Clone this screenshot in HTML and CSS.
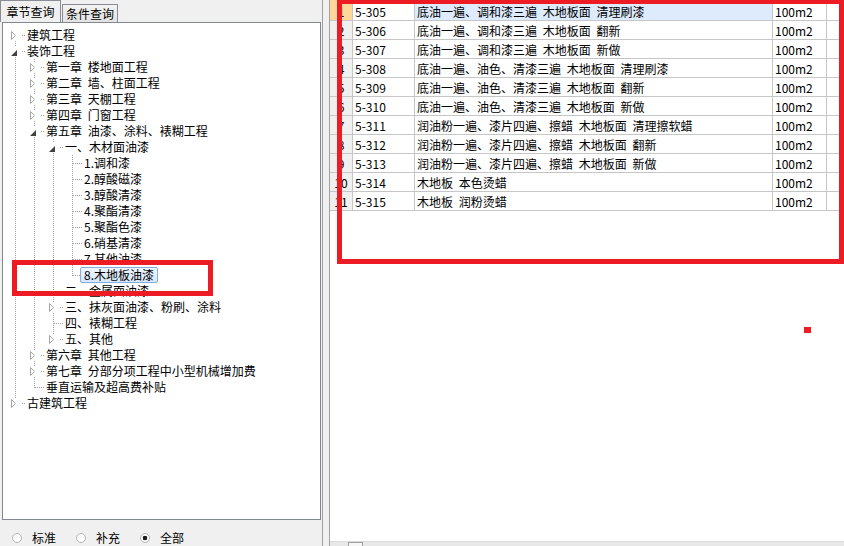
FILE: index.html
```html
<!DOCTYPE html>
<html lang="zh-CN">
<head>
  <meta charset="UTF-8">
  <title>定额查询</title>
  <link rel="stylesheet" href="styles.css">
</head>
<body>
  <svg class="sprite" xmlns="http://www.w3.org/2000/svg">
    <symbol id="closed" viewBox="0 0 11 11"><path d="M1.5 1.5 L5.5 5.5 L1.5 9.5 Z" fill="#fff" stroke="#a6a6a6"/></symbol>
    <symbol id="open" viewBox="0 0 11 11"><path d="M7 4 L7 10 L1 10 Z" fill="#404040"/></symbol>
  </svg>

  <div class="app">
    <!-- 左侧：章节树 -->
    <div class="left">
      <div class="tabs">
        <div class="tab active">章节查询</div>
        <div class="tab">条件查询</div>
      </div>

      <div class="tree">
        <div class="row"><i class="c first"><svg class="btn"><use href="#closed"/></svg></i><span class="label">建筑工程</span></div>
        <div class="row"><i class="c"><svg class="btn"><use href="#open"/></svg></i><span class="label">装饰工程</span></div>
        <div class="row"><i class="g v"></i><i class="c"><svg class="btn"><use href="#closed"/></svg></i><span class="label">第一章 楼地面工程</span></div>
        <div class="row"><i class="g v"></i><i class="c"><svg class="btn"><use href="#closed"/></svg></i><span class="label">第二章 墙、柱面工程</span></div>
        <div class="row"><i class="g v"></i><i class="c"><svg class="btn"><use href="#closed"/></svg></i><span class="label">第三章 天棚工程</span></div>
        <div class="row"><i class="g v"></i><i class="c"><svg class="btn"><use href="#closed"/></svg></i><span class="label">第四章 门窗工程</span></div>
        <div class="row"><i class="g v"></i><i class="c"><svg class="btn"><use href="#open"/></svg></i><span class="label">第五章 油漆、涂料、裱糊工程</span></div>
        <div class="row"><i class="g v"></i><i class="g v"></i><i class="c"><svg class="btn"><use href="#open"/></svg></i><span class="label">一、木材面油漆</span></div>
        <div class="row"><i class="g v"></i><i class="g v"></i><i class="g v"></i><i class="c"></i><span class="label">1.调和漆</span></div>
        <div class="row"><i class="g v"></i><i class="g v"></i><i class="g v"></i><i class="c"></i><span class="label">2.醇酸磁漆</span></div>
        <div class="row"><i class="g v"></i><i class="g v"></i><i class="g v"></i><i class="c"></i><span class="label">3.醇酸清漆</span></div>
        <div class="row"><i class="g v"></i><i class="g v"></i><i class="g v"></i><i class="c"></i><span class="label">4.聚酯清漆</span></div>
        <div class="row"><i class="g v"></i><i class="g v"></i><i class="g v"></i><i class="c"></i><span class="label">5.聚酯色漆</span></div>
        <div class="row"><i class="g v"></i><i class="g v"></i><i class="g v"></i><i class="c"></i><span class="label">6.硝基清漆</span></div>
        <div class="row"><i class="g v"></i><i class="g v"></i><i class="g v"></i><i class="c"></i><span class="label">7.其他油漆</span></div>
        <div class="row"><i class="g v"></i><i class="g v"></i><i class="g v"></i><i class="c last"></i><span class="label sel">8.木地板油漆</span></div>
        <div class="row"><i class="g v"></i><i class="g v"></i><i class="c"></i><span class="label">二、金属面油漆</span></div>
        <div class="row"><i class="g v"></i><i class="g v"></i><i class="c"><svg class="btn"><use href="#closed"/></svg></i><span class="label">三、抹灰面油漆、粉刷、涂料</span></div>
        <div class="row"><i class="g v"></i><i class="g v"></i><i class="c"></i><span class="label">四、裱糊工程</span></div>
        <div class="row"><i class="g v"></i><i class="g v"></i><i class="c last"><svg class="btn"><use href="#closed"/></svg></i><span class="label">五、其他</span></div>
        <div class="row"><i class="g v"></i><i class="c"><svg class="btn"><use href="#closed"/></svg></i><span class="label">第六章 其他工程</span></div>
        <div class="row"><i class="g v"></i><i class="c"><svg class="btn"><use href="#closed"/></svg></i><span class="label">第七章 分部分项工程中小型机械增加费</span></div>
        <div class="row"><i class="g v"></i><i class="c last"></i><span class="label">垂直运输及超高费补贴</span></div>
        <div class="row"><i class="c last"><svg class="btn"><use href="#closed"/></svg></i><span class="label">古建筑工程</span></div>
      </div>

      <div class="filters">
        <label class="radio"><span class="dot"></span>标准</label>
        <label class="radio"><span class="dot"></span>补充</label>
        <label class="radio"><span class="dot on"></span>全部</label>
      </div>
    </div>

    <div class="splitter"></div>

    <!-- 右侧：定额列表 -->
    <div class="right">
      <div class="grid-wrap">
        <table class="grid">
          <colgroup>
            <col class="w-no"><col class="w-code"><col class="w-name"><col class="w-unit"><col class="w-more">
          </colgroup>
          <tbody>
            <tr class="first cur"><td class="no">1</td><td>5-305</td><td class="name">底油一遍、调和漆三遍 木地板面 清理刷漆</td><td>100m2</td><td></td></tr>
            <tr><td class="no">2</td><td>5-306</td><td class="name">底油一遍、调和漆三遍 木地板面 翻新</td><td>100m2</td><td></td></tr>
            <tr><td class="no">3</td><td>5-307</td><td class="name">底油一遍、调和漆三遍 木地板面 新做</td><td>100m2</td><td></td></tr>
            <tr><td class="no">4</td><td>5-308</td><td class="name">底油一遍、油色、清漆三遍 木地板面 清理刷漆</td><td>100m2</td><td></td></tr>
            <tr><td class="no">5</td><td>5-309</td><td class="name">底油一遍、油色、清漆三遍 木地板面 翻新</td><td>100m2</td><td></td></tr>
            <tr><td class="no">6</td><td>5-310</td><td class="name">底油一遍、油色、清漆三遍 木地板面 新做</td><td>100m2</td><td></td></tr>
            <tr><td class="no">7</td><td>5-311</td><td class="name">润油粉一遍、漆片四遍、擦蜡 木地板面 清理擦软蜡</td><td>100m2</td><td></td></tr>
            <tr><td class="no">8</td><td>5-312</td><td class="name">润油粉一遍、漆片四遍、擦蜡 木地板面 翻新</td><td>100m2</td><td></td></tr>
            <tr><td class="no">9</td><td>5-313</td><td class="name">润油粉一遍、漆片四遍、擦蜡 木地板面 新做</td><td>100m2</td><td></td></tr>
            <tr><td class="no">10</td><td>5-314</td><td class="name">木地板 本色烫蜡</td><td>100m2</td><td></td></tr>
            <tr><td class="no">11</td><td>5-315</td><td class="name">木地板 润粉烫蜡</td><td>100m2</td><td></td></tr>
          </tbody>
        </table>
      </div>
      <div class="hscroll"><span class="thumb"></span></div>
    </div>

    <!-- 标注框 -->
    <div class="mark mark-tree"></div>
    <div class="mark mark-grid"></div>
    <div class="mark mark-dot"></div>
  </div>
</body>
</html>
```

FILE: styles.css
```css
body {
  margin: 0;
  font-family: "Noto Sans CJK SC", "Liberation Sans", sans-serif;
  font-size: 12px;
  color: #000;
  background-color: #f0f0f0;
  overflow: hidden;
}

.sprite {
  display: none;
}

.app {
  position: relative;
  display: flex;
  width: 844px;
  height: 546px;
  overflow: hidden;
}

/* Left panel */
.left {
  width: 322px;
  flex: none;
  display: flex;
  flex-direction: column;
  background-color: #f0f0f0;
}

.tabs {
  height: 22px;
  display: flex;
  align-items: flex-end;
}

.tab {
  box-sizing: border-box;
  border: 1px solid #898c95;
  border-bottom: none;
  text-align: center;
  white-space: nowrap;
}

.tab.active {
  width: 61px;
  height: 22px;
  line-height: 21px;
  background-color: #f0f0f0;
}

.tab:not(.active) {
  width: 56px;
  height: 18px;
  margin-left: 1px;
  line-height: 17px;
  background: linear-gradient(#f3f3f3, #e2e2e2);
}

.tree {
  box-sizing: border-box;
  width: 319px;
  height: 498px;
  margin-left: 2px;
  padding: 4px 0 0 3px;
  border: 1px solid #828790;
  background-color: #fff;
}

.row {
  display: flex;
  height: 16px;
}

.g,
.c {
  flex: none;
  width: 19px;
  height: 16px;
}

.g.v {
  background: repeating-linear-gradient(#a0a0a0 0 1px, transparent 1px 2px) 9px 0 / 1px 16px no-repeat;
}

.c {
  background-image:
    repeating-linear-gradient(90deg, #a0a0a0 0 1px, transparent 1px 2px),
    repeating-linear-gradient(#a0a0a0 0 1px, transparent 1px 2px);
  background-repeat: no-repeat;
  background-position: 10px 8px, 9px 0;
  background-size: 9px 1px, 1px 16px;
}

.c.last {
  background-size: 9px 1px, 1px 9px;
}

.c.first {
  background-position: 10px 8px, 9px 8px;
  background-size: 9px 1px, 1px 8px;
}

.btn {
  display: block;
  width: 11px;
  height: 11px;
  margin: 3px 0 0 4px;
  background-color: #fff;
}

.label {
  padding: 0 2px;
  line-height: 16px;
  white-space: pre;
  word-spacing: 3px;
}

.label.sel {
  box-sizing: border-box;
  height: 16px;
  margin-left: -2px;
  padding: 0 3px;
  line-height: 14px;
  border: 1px solid #84acdd;
  border-radius: 2px;
  background: linear-gradient(#eef5fd, #d5e7fb);
}

.filters {
  flex: 1;
  display: flex;
  align-items: center;
  padding: 9px 0 0 12px;
}

.radio {
  display: flex;
  align-items: center;
  width: 64px;
}

.dot {
  box-sizing: border-box;
  width: 10px;
  height: 10px;
  margin-right: 10px;
  border: 1px solid #b4b4b4;
  border-radius: 50%;
  background-color: #fff;
}

.dot.on {
  background: radial-gradient(circle, #1a1a1a 0 2px, #fff 2.6px);
}

/* Splitter */
.splitter {
  flex: none;
  width: 6px;
  border-left: 1px solid #a0a0a0;
  background-color: #f0f0f0;
}

/* Right panel */
.right {
  flex: 1;
  display: flex;
  flex-direction: column;
  border-left: 1px solid #a0a0a0;
  background-color: #fff;
  overflow: hidden;
}

.grid-wrap {
  flex: 1;
  overflow: hidden;
}

.grid {
  width: 557px;
  table-layout: fixed;
  border-collapse: separate;
  border-spacing: 0;
}

.w-no { width: 23px; }
.w-code { width: 62px; }
.w-name { width: 358px; }
.w-unit { width: 54px; }
.w-more { width: 60px; }

.grid td {
  box-sizing: border-box;
  height: 19px;
  padding: 1px 2px 0;
  border-right: 1px solid #c6c6c6;
  border-bottom: 1px solid #c6c6c6;
  line-height: 17px;
  white-space: pre;
  word-spacing: 3px;
  overflow: hidden;
}

.grid tr.first td {
  height: 21px;
  padding-top: 2px;
}

.grid td.no {
  padding: 0;
  text-align: center;
  background-color: #f0f0f0;
}

.grid tr.cur td.no {
  background-color: #ffd899;
}

.grid tr.cur td.name {
  background-color: #ddebfc;
}

.hscroll {
  height: 4px;
  padding-left: 18px;
  border-top: 1px solid #dadada;
  background-color: #e8e8e8;
}

.thumb {
  display: block;
  box-sizing: border-box;
  width: 15px;
  height: 5px;
  border: 1px solid #a0a0a0;
  border-bottom: none;
  background-color: #f6f6f6;
}

/* Red annotation boxes */
.mark {
  position: absolute;
  box-sizing: border-box;
  border: 5px solid #ed1c24;
}

.mark-tree {
  left: 12px;
  top: 260px;
  width: 201px;
  height: 36px;
}

.mark-grid {
  left: 337px;
  top: -1px;
  width: 507px;
  height: 265px;
}

.mark-dot {
  left: 804px;
  top: 327px;
  width: 7px;
  height: 6px;
  border: none;
  background-color: #ed1c24;
}
```
